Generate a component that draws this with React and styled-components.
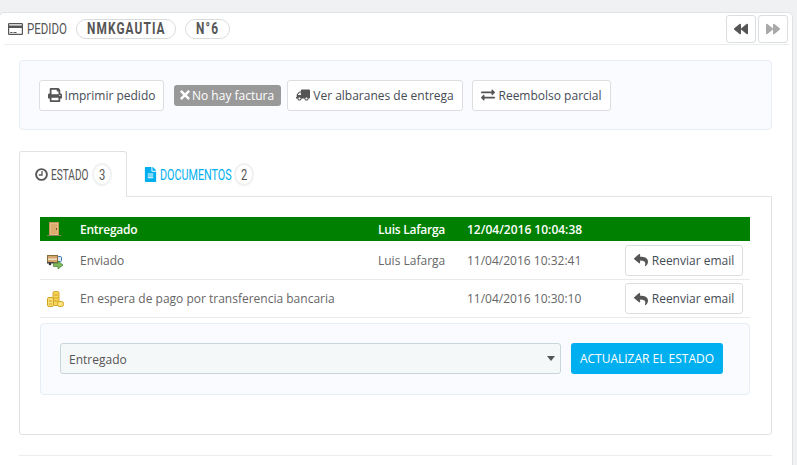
import React from 'react';
import styled, { createGlobalStyle } from 'styled-components';
import { FaPrint, FaTimes, FaTruck, FaExchangeAlt, FaFileAlt, FaReply, FaBackward, FaForward } from 'react-icons/fa';

const Global = createGlobalStyle`
  html, body { margin: 0; padding: 0; background: #eff1f2; height: 465px; overflow: hidden; }
  body { font-family: "Open Sans", "Liberation Sans", sans-serif; font-size: 12px; color: #555; }
  * { box-sizing: border-box; }
`;

const Page = styled.div`
  height: 465px;
  padding: 12px 4px 0 0;
`;
const Panel = styled.section`
  margin-left: -1px;
  height: 460px;
  background: #fff;
  border: 1px solid #dfe3e5;
  border-radius: 5px 5px 0 0;
  padding: 0 3px 0 4px;
`;
const Heading = styled.header`
  display: flex;
  align-items: center;
  height: 32px;
  border-bottom: 1px solid #eaedee;
  padding: 0 1px 0 4px;
  margin-bottom: 15px;
`;
/* Condensed caption: no condensed family is installed, so the text is narrowed in place */
const Squeeze = styled.span`
  display: inline-block;
  width: ${p => p.$w}px;
  font-family: Roboto, sans-serif;
  font-size: ${p => p.$size || 14}px;
  font-weight: ${p => p.$weight || 400};
  letter-spacing: ${p => p.$ls || 0}px;
  white-space: nowrap;
  transform: scaleX(${p => p.$sx});
  transform-origin: left center;
`;
const Title = styled.span`
  display: flex;
  margin-left: 4px;
  color: #555;
`;
const Pill = styled.span`
  display: flex;
  align-items: center;
  height: 20px;
  border: 1px solid #d9dcde;
  border-radius: 10px;
  padding-left: 10px;
  width: ${p => p.$w}px;
  color: #555;
  margin-left: 9px;
`;
const Pager = styled.div`
  margin-left: auto;
  display: flex;
  gap: 2px;
`;
const PagerBtn = styled.span`
  width: 30px;
  height: 28px;
  border: 1px solid #dcdfe1;
  border-radius: 3px;
  display: flex;
  align-items: center;
  justify-content: center;
  color: ${p => (p.$off ? '#a9a9a9' : '#555')};
  font-size: 14px;
`;
const Content = styled.div`
  padding: 0 17px 0 15px;
`;
const Toolbar = styled.div`
  height: 70px;
  background: #fafbfe;
  border: 1px solid #e6edf4;
  border-radius: 4px;
  display: flex;
  align-items: center;
  padding: 0 19px;
`;
const Btn = styled.span`
  display: inline-flex;
  align-items: center;
  justify-content: center;
  height: 31px;
  width: ${p => p.$w}px;
  margin-right: ${p => p.$mr || 0}px;
  background: #fff;
  border: 1px solid #dcdfe1;
  border-radius: 3px;
  font-size: 12px;
  color: #444c55;
  white-space: nowrap;
  svg { color: #555; font-size: 14px; margin-right: 3px; }
`;
const FlippedTruck = styled(FaTruck)`
  transform: scaleX(-1);
`;
const Badge = styled.span`
  display: inline-flex;
  align-items: center;
  height: 21px;
  width: 107px;
  padding-left: 4px;
  margin-right: 6px;
  background: #999;
  color: #fff;
  border-radius: 3px;
  font-size: 12px;
  white-space: nowrap;
  svg { font-size: 14px; }
`;
const Tabs = styled.nav`
  display: flex;
  margin-top: 21px;
  height: 46px;
  position: relative;
  z-index: 1;
`;
const Tab = styled.div`
  height: 46px;
  width: ${p => p.$w}px;
  display: flex;
  align-items: center;
  padding-left: ${p => p.$pad}px;
  color: ${p => (p.$active ? '#555' : '#00aff0')};
  background: ${p => (p.$active ? '#fff' : 'transparent')};
  border: 1px solid ${p => (p.$active ? '#dfe3e5' : 'transparent')};
  border-bottom: none;
  border-radius: 3px 3px 0 0;
  svg { margin-right: 3px; flex: none; }
`;
const Count = styled.span`
  width: 20px;
  height: 23px;
  margin-left: 4px;
  border: 2px solid #eff1f2;
  border-radius: 50%;
  display: flex;
  align-items: center;
  justify-content: center;
  color: #555;
`;
const DocIcon = styled(FaFileAlt)`
  font-size: 15px;
  && { margin-right: 2px; }
`;
const TabPanel = styled.div`
  margin-top: -1px;
  height: 239px;
  background: #fff;
  border: 1px solid #dfe3e5;
  border-radius: 0 0 3px 3px;
  padding: 20px 21px 0 20px;
`;
const Row = styled.div`
  display: grid;
  grid-template-columns: 40px 298px 89px 158px 1fr;
  align-items: center;
  height: ${p => p.$h}px;
  font-size: 12px;
  ${p => p.$current
    ? 'background: #008000; color: #fff; font-weight: 600;'
    : 'border-bottom: 1px solid #e8eaeb; color: #666;'}
`;
const TightCell = styled.span`
  letter-spacing: -0.25px;
`;
const IconCell = styled.span`
  display: flex;
  padding-left: 7px;
`;
const Resend = styled(Btn)`
  width: 118px;
  justify-self: end;
  margin-right: 7px;
  svg { margin-right: 4px; }
`;
const FormBox = styled.div`
  margin-top: 5px;
  height: 72px;
  background: #fafbfe;
  border: 1px solid #e6edf4;
  border-radius: 4px;
  padding: 19px 19px;
  display: flex;
  gap: 10px;
`;
const Select = styled.div`
  width: 501px;
  height: 31px;
  background: #f5f8f9;
  border: 1px solid #c7d6db;
  border-radius: 3px;
  display: flex;
  align-items: center;
  padding: 0 5px 0 8px;
  color: #555;
  font-size: 12px;
  &::after {
    content: '';
    margin-left: auto;
    border-left: 4.5px solid transparent;
    border-right: 4.5px solid transparent;
    border-top: 5px solid #555;
  }
`;
const SelectValue = styled.span`
  padding-top: 2px;
`;
const Submit = styled.span`
  width: 152px;
  height: 31px;
  background: #00aff0;
  color: #fff;
  border-radius: 3px;
  display: flex;
  align-items: center;
  justify-content: center;
  font-size: 12px;
`;
const Rule = styled.hr`
  border: 0;
  border-top: 1px solid #eaedee;
  margin: 20px 0 0;
`;

const CardIcon = () => (
  <svg width="15" height="12" viewBox="0 0 15 12"><path fillRule="evenodd" fill="#555" d="M1.200 0h12.600A1.200 1.200 0 0 1 15 1.200v9.600a1.200 1.200 0 0 1-1.200 1.200H1.200A1.200 1.200 0 0 1 0 10.800V1.200A1.200 1.200 0 0 1 1.200 0zM1.200 1.200V2.500h12.600V1.200zM1.200 5v5.800h12.600V5zM2.200 9h2.300v1H2.200zM5.500 9h3v1h-3z" /></svg>
);
const ClockIcon = () => (
  <svg width="13" height="13" viewBox="0 0 13 13"><circle cx="6.500" cy="6.500" r="5.400" fill="none" stroke="#555" strokeWidth="1.900" /><path d="M7 3v4H3.800" fill="none" stroke="#555" strokeWidth="1.300" /></svg>
);
const DoorIcon = () => (
  <svg width="14" height="14" viewBox="0 0 14 14"><rect x="0" y="13" width="14" height="1" fill="#8d7b5a" /><rect x="2" y="0" width="10" height="13" fill="#c2945a" /><rect x="3" y="1" width="8" height="12" fill="#e6bb85" /><rect x="4" y="2" width="6" height="10" fill="#deab6e" /><rect x="9" y="6" width="1" height="2" fill="#7a5320" /></svg>
);
const ShipIcon = () => (
  <svg width="17" height="19" viewBox="0 -4 17 19"><rect x="10.500" y="1.500" width="4" height="5" rx="1" fill="#dfe9f5" stroke="#3e78b8" /><rect x="0.500" y="0.500" width="10" height="7" fill="#d5a76f" stroke="#8a6a3f" /><rect x="1" y="3.500" width="9" height="1.500" fill="#f0e2c8" /><rect x="0" y="7" width="7" height="1.500" fill="#444" /><circle cx="3" cy="9" r="1.300" fill="#333" /><path d="M6.500 8.500h4.500V6l5 4-5 4v-2.500H6.500z" fill="#7cb85c" stroke="#3f7f2d" strokeWidth=".7" /></svg>
);
const CoinsIcon = () => (
  <svg width="17" height="16" viewBox="0 0 17 16"><rect x="6" y="0.500" width="6" height="14" rx="1.500" fill="#f6d75c" stroke="#d2a321" /><rect x="0.500" y="6.500" width="6" height="9" rx="1.500" fill="#f8df78" stroke="#d2a321" /><rect x="10.500" y="10.500" width="6" height="5" rx="2" fill="#fae27e" stroke="#d2a321" /><path d="M7 4h4M7 7h4M7 10h4M2 10h3M2 13h3" stroke="#d2a321" /></svg>
);

export default function App() {
  return (
    <Page>
      <Global />
      <Panel>
        <Heading>
          <CardIcon />
          <Title><Squeeze $w={40} $sx={0.82}>PEDIDO</Squeeze></Title>
          <Pill $w={100}><Squeeze $w={78} $size={16} $weight={700} $ls={1.5} $sx={0.74}>NMKGAUTIA</Squeeze></Pill>
          <Pill $w={45}><Squeeze $w={23} $size={16} $weight={700} $ls={1.5} $sx={0.74}>N°6</Squeeze></Pill>
          <Pager>
            <PagerBtn><FaBackward /></PagerBtn>
            <PagerBtn $off><FaForward /></PagerBtn>
          </Pager>
        </Heading>
        <Content>
          <Toolbar>
            <Btn $w={125} $mr={10}><FaPrint />Imprimir pedido</Btn>
            <Badge><FaTimes />No hay factura</Badge>
            <Btn $w={176} $mr={9}><FlippedTruck />Ver albaranes de entrega</Btn>
            <Btn $w={139}><FaExchangeAlt />Reembolso parcial</Btn>
          </Toolbar>
          <Tabs>
            <Tab $active $w={108} $pad={15}><ClockIcon /><Squeeze $w={37} $sx={0.72}>ESTADO</Squeeze><Count><Squeeze $w={6} $sx={0.8}>3</Squeeze></Count></Tab>
            <Tab $w={140} $pad={15}><DocIcon /><Squeeze $w={70} $sx={0.77}>DOCUMENTOS</Squeeze><Count><Squeeze $w={6} $sx={0.8}>2</Squeeze></Count></Tab>
          </Tabs>
          <TabPanel>
            <Row $current $h={24}>
              <IconCell><DoorIcon /></IconCell>
              <TightCell>Entregado</TightCell>
              <TightCell>Luis Lafarga</TightCell>
              <span>12/04/2016 10:04:38</span>
              <span />
            </Row>
            <Row $h={39}>
              <IconCell><ShipIcon /></IconCell>
              <span>Enviado</span>
              <span>Luis Lafarga</span>
              <span>11/04/2016 10:32:41</span>
              <Resend><FaReply />Reenviar email</Resend>
            </Row>
            <Row $h={38}>
              <IconCell><CoinsIcon /></IconCell>
              <span>En espera de pago por transferencia bancaria</span>
              <span />
              <span>11/04/2016 10:30:10</span>
              <Resend><FaReply />Reenviar email</Resend>
            </Row>
            <FormBox>
              <Select><SelectValue>Entregado</SelectValue></Select>
              <Submit>ACTUALIZAR EL ESTADO</Submit>
            </FormBox>
          </TabPanel>
          <Rule />
        </Content>
      </Panel>
    </Page>
  );
}
